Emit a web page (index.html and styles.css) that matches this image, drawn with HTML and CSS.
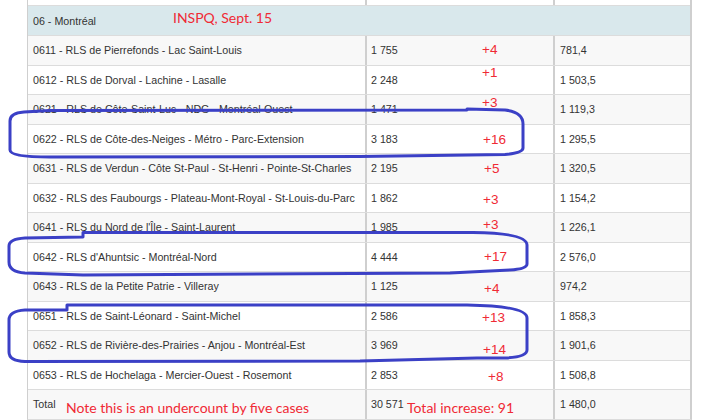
FILE: index.html
```html
<!DOCTYPE html>
<html>
<head>
<meta charset="utf-8">
<link rel="stylesheet" href="styles.css">
</head>
<body>
<div class="sheet">
  <div class="table">
    <div class="row cut"><div class="c1"></div><div class="c2"></div><div class="c3"></div></div>
    <div class="row head"><div class="c1">06 - Montréal</div></div>
    <div class="row odd"><div class="c1">0611 - RLS de Pierrefonds - Lac Saint-Louis</div><div class="c2">1 755</div><div class="c3">781,4</div></div>
    <div class="row"><div class="c1">0612 - RLS de Dorval - Lachine - Lasalle</div><div class="c2">2 248</div><div class="c3">1 503,5</div></div>
    <div class="row odd"><div class="c1">0621 - RLS de Côte-Saint-Luc - NDG - Montréal-Ouest</div><div class="c2">1 471</div><div class="c3">1 119,3</div></div>
    <div class="row"><div class="c1">0622 - RLS de Côte-des-Neiges - Métro - Parc-Extension</div><div class="c2">3 183</div><div class="c3">1 295,5</div></div>
    <div class="row odd"><div class="c1">0631 - RLS de Verdun - Côte St-Paul - St-Henri - Pointe-St-Charles</div><div class="c2">2 195</div><div class="c3">1 320,5</div></div>
    <div class="row"><div class="c1">0632 - RLS des Faubourgs - Plateau-Mont-Royal - St-Louis-du-Parc</div><div class="c2">1 862</div><div class="c3">1 154,2</div></div>
    <div class="row odd"><div class="c1">0641 - RLS du Nord de l'Île - Saint-Laurent</div><div class="c2">1 985</div><div class="c3">1 226,1</div></div>
    <div class="row"><div class="c1">0642 - RLS d'Ahuntsic - Montréal-Nord</div><div class="c2">4 444</div><div class="c3">2 576,0</div></div>
    <div class="row odd"><div class="c1">0643 - RLS de la Petite Patrie - Villeray</div><div class="c2">1 125</div><div class="c3">974,2</div></div>
    <div class="row"><div class="c1">0651 - RLS de Saint-Léonard - Saint-Michel</div><div class="c2">2 586</div><div class="c3">1 858,3</div></div>
    <div class="row odd"><div class="c1">0652 - RLS de Rivière-des-Prairies - Anjou - Montréal-Est</div><div class="c2">3 969</div><div class="c3">1 901,6</div></div>
    <div class="row"><div class="c1">0653 - RLS de Hochelaga - Mercier-Ouest - Rosemont</div><div class="c2">2 853</div><div class="c3">1 508,8</div></div>
    <div class="row odd total"><div class="c1">Total</div><div class="c2">30 571</div><div class="c3">1 480,0</div></div>
  </div>

  <svg class="marks" width="720" height="420" viewBox="0 0 720 420">
    <path d="M 24 112 L 50 110.5 L 467 110 L 467 109 L 505 110 Q 523 112 523 124 L 523 148 Q 523 153 505 154.5 L 360 156.5 L 50 157 Q 10 157 10 150 L 10 121 Q 10 113 24 112 Z"/>
    <path d="M 25 238 L 83 237 L 83 232.5 L 473 232.5 Q 527 233 527 245 L 527 264 Q 527 269 510 270 L 450 273 L 83 275 L 25 273 Q 9 272 9 262 L 9 246 Q 9 239 25 238 Z"/>
    <path d="M 25 310 L 67 310 L 67 305 L 467 305 Q 527 306 527 318 L 527 350 Q 527 357 505 358 L 477 358 L 360 361 L 25 361.5 Q 9 361 9 352 L 9 320 Q 9 311 25 310 Z"/>
  </svg>

  <span class="note big" style="left:173px; top:9px">INSPQ, Sept. 15</span>
  <span class="note inc" style="left:482px; top:42px">+4</span>
  <span class="note inc" style="left:482px; top:65px">+1</span>
  <span class="note inc" style="left:482px; top:95px">+3</span>
  <span class="note inc" style="left:483px; top:132px">+16</span>
  <span class="note inc" style="left:484px; top:161px">+5</span>
  <span class="note inc" style="left:483px; top:192px">+3</span>
  <span class="note inc" style="left:483px; top:217px">+3</span>
  <span class="note inc" style="left:484px; top:249px">+17</span>
  <span class="note inc" style="left:484px; top:281px">+4</span>
  <span class="note inc" style="left:482px; top:310px">+13</span>
  <span class="note inc" style="left:483px; top:342px">+14</span>
  <span class="note inc" style="left:488px; top:369px">+8</span>
  <span class="note big" style="left:66px; top:399px">Note this is an undercount by five cases</span>
  <span class="note big" style="left:407px; top:399px">Total increase: 91</span>
</div>
</body>
</html>
```

FILE: styles.css
```css
html, body {
  margin: 0;
  padding: 0;
  background: #fff;
}

.sheet {
  position: relative;
  width: 720px;
  height: 420px;
  overflow: hidden;
  padding-left: 27px;
  box-sizing: border-box;
  background: #fff;
  font-family: "Liberation Sans", Arial, sans-serif;
  font-size: 10.7px;
  color: #333;
}

.table {
  width: 665px;
  box-sizing: border-box;
  border-left: 1px solid #cfcfcf;
  border-right: 2px solid #cfcfcf;
  border-bottom: 1px solid #dcdcdc;
}

.row {
  display: grid;
  grid-template-columns: 337px 188px 1fr;
  height: 29.5px;
  box-sizing: border-box;
  border-top: 1px solid #dcdcdc;
  background: #fff;
}

.row.odd {
  background: #f8f8f8;
}

.row.cut {
  height: 5px;
  border-top: 0;
}

.row.head {
  height: 30px;
  background: #d9e8ec;
  grid-template-columns: 1fr;
}

.row > div {
  display: flex;
  align-items: center;
  padding-left: 5px;
  white-space: nowrap;
  overflow: hidden;
}

.row .c2,
.row .c3 {
  border-left: 2px solid #cfcfcf;
}

.row .c2 {
  padding-left: 4px;
}

.marks {
  position: absolute;
  left: 0;
  top: 0;
  pointer-events: none;
}

.marks path {
  fill: none;
  stroke: #3b40c6;
  stroke-width: 3;
  stroke-linejoin: round;
}

.note {
  position: absolute;
  color: #f02a35;
  white-space: nowrap;
  line-height: 16px;
}

.note.inc {
  font-family: "Liberation Sans", Arial, sans-serif;
  font-size: 13.5px;
}

.note.big {
  font-family: "Lato", "Open Sans", sans-serif;
  font-size: 14px;
  line-height: 18px;
}
```
